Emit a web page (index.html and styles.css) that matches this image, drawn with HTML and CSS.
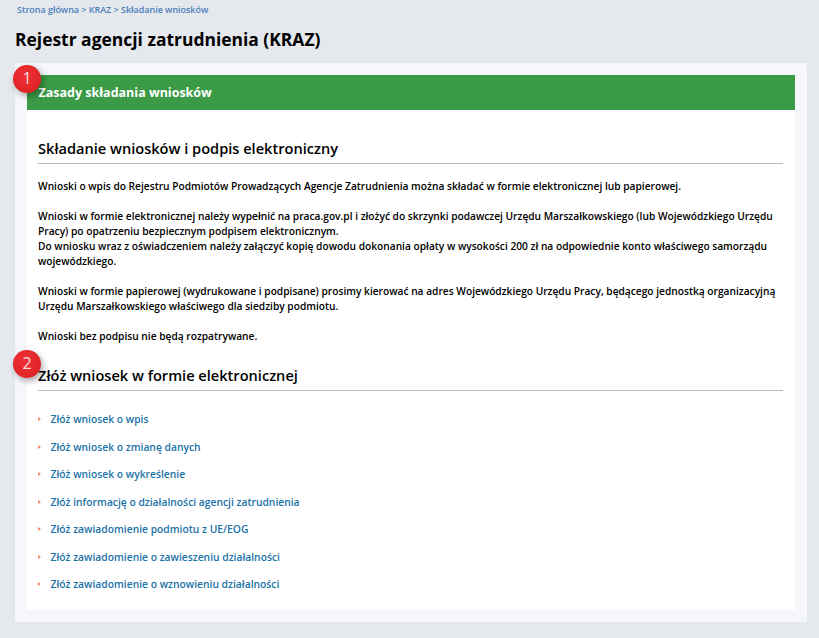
FILE: index.html
```html
<!DOCTYPE html>
<html lang="pl">
<head>
    <meta charset="UTF-8">
    <title>Rejestr agencji zatrudnienia (KRAZ)</title>
    <link rel="stylesheet" href="styles.css">
</head>
<body>
    <div class="breadcrumb"><a>Strona główna</a> &gt; <a>KRAZ</a> &gt; <a>Składanie wniosków</a></div>
    <h1>Rejestr agencji zatrudnienia (KRAZ)</h1>
    <div class="panel">
        <div class="card">
            <span class="badge badge-one">1</span>
            <div class="card-header">Zasady składania wniosków</div>
            <div class="card-body">
                <h2>Składanie wniosków i podpis elektroniczny</h2>
                <p>Wnioski o wpis do Rejestru Podmiotów Prowadzących Agencje Zatrudnienia można składać w formie elektronicznej lub papierowej.</p>
                <p>Wnioski w formie elektronicznej należy wypełnić na praca.gov.pl i złożyć do skrzynki podawczej Urzędu Marszałkowskiego (lub Wojewódzkiego Urzędu Pracy) po opatrzeniu bezpiecznym podpisem elektronicznym.<br>Do wniosku wraz z oświadczeniem należy załączyć kopię dowodu dokonania opłaty w wysokości 200 zł na odpowiednie konto właściwego samorządu wojewódzkiego.</p>
                <p>Wnioski w formie papierowej (wydrukowane i podpisane) prosimy kierować na adres Wojewódzkiego Urzędu Pracy, będącego jednostką organizacyjną Urzędu Marszałkowskiego właściwego dla siedziby podmiotu.</p>
                <p>Wnioski bez podpisu nie będą rozpatrywane.</p>
                <div class="section">
                    <span class="badge badge-two">2</span>
                    <h2>Złóż wniosek w formie elektronicznej</h2>
                </div>
                <ul class="links">
                    <li><a>Złóż wniosek o wpis</a></li>
                    <li><a>Złóż wniosek o zmianę danych</a></li>
                    <li><a>Złóż wniosek o wykreślenie</a></li>
                    <li><a>Złóż informację o działalności agencji zatrudnienia</a></li>
                    <li><a>Złóż zawiadomienie podmiotu z UE/EOG</a></li>
                    <li><a>Złóż zawiadomienie o zawieszeniu działalności</a></li>
                    <li><a>Złóż zawiadomienie o wznowieniu działalności</a></li>
                </ul>
            </div>
        </div>
    </div>
</body>
</html>
```

FILE: styles.css
```css
* {
    box-sizing: border-box;
    margin: 0;
    padding: 0;
}
html, body {
    height: 638px;
    overflow: hidden;
}
body {
    font-family: "Open Sans", "Noto Sans", sans-serif;
    background: #e5e8ed;
    color: #000;
    padding: 3px 12px 16px 15px;
}
.breadcrumb {
    font-size: 8.95px;
    line-height: 13px;
    font-weight: 600;
    color: #4a7fbd;
    padding-left: 2px;
}
h1 {
    font-size: 17.45px;
    line-height: 24px;
    font-weight: 700;
    margin-top: 11px;
    margin-bottom: 12px;
}
.panel {
    background: #f5f7fb;
    border-radius: 2px;
    padding: 12px;
    height: 559px;
}
.card {
    position: relative;
    background: #fff;
    height: 535px;
}
.card-header {
    background: #3a9a46;
    color: #fff;
    height: 35px;
    line-height: 36px;
    padding-left: 11.5px;
    font-size: 12.5px;
    font-weight: 700;
}
.card-body {
    padding: 28px 12px 0 11px;
}
h2 {
    font-size: 14.6px;
    line-height: 21px;
    font-weight: 600;
    padding-bottom: 4px;
    border-bottom: 1px solid #b9b9b9;
}
p {
    font-size: 10.2px;
    line-height: 15px;
    font-weight: 600;
    margin-top: 15px;
}
.section {
    margin-top: 21px;
}
.badge {
    position: absolute;
    left: -14px;
    width: 28px;
    height: 28px;
    border-radius: 50%;
    background: radial-gradient(circle at 45% 40%, #f03236, #d61c20);
    box-shadow: 2px 3px 6px rgba(0, 0, 0, 0.35);
    color: #f6dcdc;
    font-size: 16px;
    line-height: 27px;
    text-align: center;
    z-index: 2;
}
.badge-one {
    top: -10px;
}
.badge-two {
    top: 275px;
}
.links {
    list-style: none;
    margin-top: 21px;
}
.links li {
    position: relative;
    height: 27.5px;
    line-height: 15px;
    padding-left: 12.5px;
    font-size: 10.3px;
    font-weight: 600;
    color: #1a72a8;
}
.links li::before {
    content: "";
    position: absolute;
    left: 0;
    top: 5px;
    border-left: 3px solid #f08a70;
    border-top: 2.5px solid transparent;
    border-bottom: 2.5px solid transparent;
}
```
